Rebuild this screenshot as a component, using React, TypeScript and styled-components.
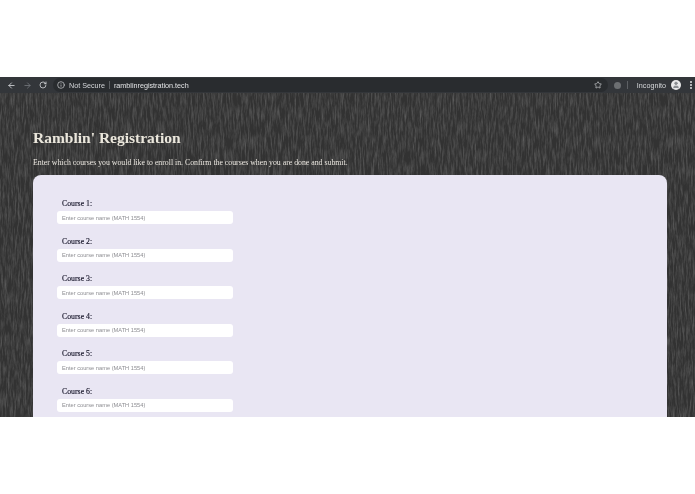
import React from "react";
import styled, { createGlobalStyle } from "styled-components";
import { ArrowLeft, ArrowRight, RotateCw, Info, Star, User } from "lucide-react";

const courses = [1, 2, 3, 4, 5, 6];

const texture = encodeURIComponent(
  `<svg xmlns="http://www.w3.org/2000/svg" width="695" height="324"><filter id="t" x="0" y="0" width="100%" height="100%"><feTurbulence type="fractalNoise" baseFrequency="0.6 0.07" numOctaves="4" seed="7"/><feColorMatrix values="0 0 0 0 0.6 0 0 0 0 0.6 0 0 0 0 0.6 1.6 0 0 0 -0.6"/></filter><rect width="695" height="324" fill="#323232"/><rect width="695" height="324" filter="url(#t)" opacity="0.3"/></svg>`
);

const App = () => {
  return (
    <Screen>
      <GlobalStyle />
      <Blank $height={77} />
      <Browser>
        <Toolbar>
          <NavIcons>
            <ArrowLeft size={9} color="#d5d7da" strokeWidth={2.2} />
            <ArrowRight size={9} color="#73777c" strokeWidth={2.2} />
            <RotateCw size={8} color="#d5d7da" strokeWidth={2.4} />
          </NavIcons>
          <Omnibox>
            <Info size={8} color="#d5d7da" strokeWidth={2} />
            <NotSecure>Not Secure</NotSecure>
            <Divider />
            <Url>ramblinregistration.tech</Url>
            <Star size={8} color="#d5d7da" strokeWidth={2} style={{ marginLeft: "auto" }} />
          </Omnibox>
          <Extension />
          <Divider />
          <Incognito>Incognito</Incognito>
          <Avatar>
            <User size={8} color="#8a8d91" fill="#8a8d91" />
          </Avatar>
          <MenuDots>
            <i />
            <i />
            <i />
          </MenuDots>
        </Toolbar>
        <Page>
          <Title>Ramblin' Registration</Title>
          <Intro>
            Enter which courses you would like to enroll in. Confirm the courses when you are done
            and submit.
          </Intro>
          <Card>
            {courses.map((n) => (
              <Field key={n}>
                <Label htmlFor={`course-${n}`}>Course {n}:</Label>
                <Input id={`course-${n}`} placeholder="Enter course name (MATH 1554)" />
              </Field>
            ))}
          </Card>
        </Page>
      </Browser>
      <Blank $height={77} />
    </Screen>
  );
};

export default App;

const GlobalStyle = createGlobalStyle`
  html, body {
    margin: 0;
    background: #fff;
  }
  input::placeholder {
    color: #8d8d92;
    opacity: 1;
  }
`;

const Screen = styled.div`
  width: 695px;
  height: 494px;
  display: flex;
  flex-direction: column;
  overflow: hidden;
`;

const Blank = styled.div<{ $height: number }>`
  height: ${(p) => p.$height}px;
  flex-shrink: 0;
  background: #fff;
`;

const Browser = styled.div`
  height: 340px;
  flex-shrink: 0;
  display: flex;
  flex-direction: column;
  overflow: hidden;
  /* the reference is a soft, scaled-down capture */
  filter: blur(0.3px);
`;

const Toolbar = styled.div`
  height: 16px;
  flex-shrink: 0;
  display: flex;
  align-items: center;
  padding: 0 3px 0 7px;
  background: #33363a;
  font-family: "Liberation Sans", Arial, sans-serif;
  font-size: 7.2px;
  color: #d5d7da;
`;

const NavIcons = styled.div`
  display: flex;
  align-items: center;
  gap: 7px;
`;

const Omnibox = styled.div`
  flex: 1;
  height: 14px;
  margin: 0 6px 0 6px;
  padding: 0 6px 0 4px;
  display: flex;
  align-items: center;
  gap: 4px;
  border-radius: 7px;
  background: #292c2f;
`;

const NotSecure = styled.span`
  white-space: nowrap;
`;

const Divider = styled.span`
  width: 1px;
  height: 8px;
  background: #5d6064;
`;

const Url = styled.span`
  color: #e4e5e7;
  white-space: nowrap;
`;

const Extension = styled.span`
  width: 7px;
  height: 7px;
  margin-right: 6px;
  border-radius: 50%;
  background: #6c6f72;
`;

const Incognito = styled.span`
  margin: 0 5px 0 9px;
  white-space: nowrap;
`;

const Avatar = styled.span`
  width: 10px;
  height: 10px;
  border-radius: 50%;
  background: #e9e9ea;
  display: flex;
  align-items: center;
  justify-content: center;
  overflow: hidden;
`;

const MenuDots = styled.span`
  margin-left: 9px;
  display: flex;
  flex-direction: column;
  gap: 1px;

  i {
    display: block;
    width: 2px;
    height: 2px;
    border-radius: 50%;
    background: #dfe0e2;
  }
`;

const Page = styled.div`
  flex: 1;
  min-height: 0;
  padding: 35px 28px 0 33px;
  overflow: hidden;
  background: #323232 url("data:image/svg+xml,${texture}") no-repeat;
  font-family: "Liberation Serif", "Times New Roman", serif;
`;

const Title = styled.h1`
  margin: 0;
  font-size: 15.5px;
  line-height: 20px;
  font-weight: 700;
  color: #ebe7dc;
`;

const Intro = styled.p`
  margin: 9px 0 0;
  font-size: 7.8px;
  line-height: 12px;
  color: #ebe7e0;
  white-space: nowrap;
`;

const Card = styled.div`
  margin-top: 6px;
  padding: 24px 24px 40px;
  border-radius: 8px;
  background: #e9e6f3;
  display: flex;
  flex-direction: column;
  gap: 12.6px;
`;

const Field = styled.div`
  display: flex;
  flex-direction: column;
  gap: 2px;
`;

const Label = styled.label`
  padding-left: 5px;
  font-size: 7.8px;
  line-height: 10px;
  color: #17162a;
  -webkit-text-stroke: 0.15px #17162a;
`;

const Input = styled.input`
  box-sizing: border-box;
  width: 176px;
  height: 13px;
  padding: 0 5px;
  border: none;
  border-radius: 3px;
  background: #fff;
  font-family: "Liberation Sans", Arial, sans-serif;
  font-size: 5.7px;
  outline: none;
`;
